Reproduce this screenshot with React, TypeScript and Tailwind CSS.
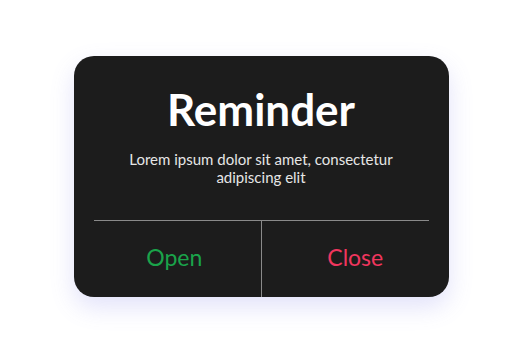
export default function App() {
  return (
    <div className="flex h-[360px] w-full justify-center bg-white pt-[56px]" style={{ fontFamily: "Lato, 'Noto Sans', sans-serif" }}>
      <div className="flex h-[241px] w-[375px] flex-col rounded-[20px] bg-[#1c1c1c] shadow-[0_10px_24px_rgba(110,110,230,0.2)]">
        <h1 className="mt-[27px] text-center text-[44px] font-bold leading-[52px] text-white">Reminder</h1>
        <p className="mx-auto mt-[15px] w-[300px] text-center text-[15px] leading-[18px] text-[#e6e6e6]">
          Lorem ipsum dolor sit amet, consectetur adipiscing elit
        </p>
        <div className="mx-5 mt-auto h-px bg-[#8a8a8a]" />
        <div className="grid h-[76px] grid-cols-2">
          <button className="flex items-center justify-center pb-[4px] pl-[14px] text-[23px] text-[#1aa34a]">Open</button>
          <button className="flex items-center justify-center border-l border-[#8a8a8a] pb-[4px] text-[23px] text-[#f0365e]">Close</button>
        </div>
      </div>
    </div>
  );
}
